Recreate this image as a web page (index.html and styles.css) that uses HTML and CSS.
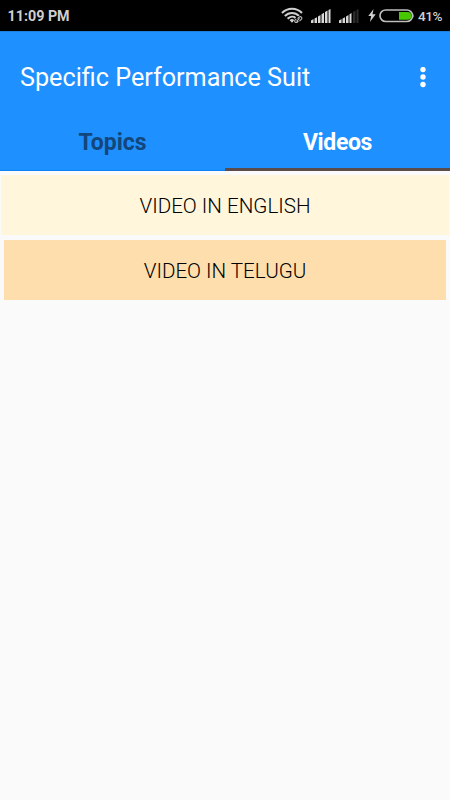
FILE: index.html
```html
<!DOCTYPE html>
<html lang="en">
<head>
<meta charset="utf-8">
<title>Specific Performance Suit</title>
<link rel="stylesheet" href="styles.css">
</head>
<body>
<div class="status">
  <span class="clock">11:09 PM</span>
  <div class="indicators">
    <svg class="wifi" width="22" height="16" viewBox="0 0 22 16" fill="none" stroke="#cfcfcf" stroke-width="2.100">
      <path d="M1 6C6.500.4 15.500.4 21 6M3.800 9C8 4.900 14 4.900 18.200 9M6.600 11.800C9.300 9.200 12.700 9.200 14.500 10.900"/>
      <path d="M8.600 13.300Q11 10.900 13.400 13.300L11 15.800Z" fill="#cfcfcf" stroke="none"/>
      <path d="M15 14.500l4.200-3.900" stroke="#000" stroke-width="4.500" stroke-linecap="round"/>
      <path d="M16.500 11.700l1.800-1.700q1.200-.8 2.100.1t.1 2.100l-2 1.900M18.600 11.400l-3.200 3M17.400 14l-1.300 1.200q-1.200.8-2-.1t-.1-2l1.300-1.300" stroke="#bbb" stroke-width="1.100"/>
    </svg>
    <svg class="signal" width="20" height="14" viewBox="0 0 20 14" fill="#d8d8d8">
      <path d="M0 14v-2.600l2.500-1.300V14zM3.500 14V9.600L6 8.200V14zM7 14V7.400l2.500-1.500V14zM10.500 14V5.200L13 3.700V14zM14 14V3.100l2.500-1.500V14zM17.500 14V1L19.500 0v14z"/>
    </svg>
    <svg class="signal2" width="20" height="14" viewBox="0 0 20 14" fill="#d8d8d8">
      <path d="M0 14v-2.600l2.500-1.300V14zM3.500 14V9.600L6 8.200V14zM7 14V7.400l2.500-1.500V14zM10.500 14V5.200L12.500 4V14z"/>
      <path fill="#2c2c2c" d="M14 14V3.100l2.500-1.500V14zM17.500 14V1L19.500 0v14z"/>
    </svg>
    <svg class="bolt" width="8" height="13" viewBox="0 0 8 13" fill="#d0d0d0"><path d="M5.600 0L.3 7h2.900L1.900 13 7.700 5.300H4.500z"/></svg>
    <svg class="battery" width="36" height="14" viewBox="0 0 36 14">
      <rect x="1" y="1" width="32.500" height="11.500" rx="5.700" fill="#000" stroke="#bdbdbd" stroke-width="1.700"/>
      <path d="M20 2.900h8.500a3.900 3.900 0 0 1 0 7.800H20z" fill="#48c800"/>
      <path d="M34.500 4.200q1.200 2.500 0 5z" fill="#bdbdbd"/>
    </svg>
    <span class="percent">41%</span>
  </div>
</div>
<header>
  <div class="toolbar">
    <h1>Specific Performance Suit</h1>
    <svg width="6" height="22" viewBox="0 0 6 22" fill="#fff"><circle cx="3" cy="2.500" r="2.700"/><circle cx="3" cy="10" r="2.700"/><circle cx="3" cy="17.500" r="2.700"/></svg>
  </div>
  <nav>
    <div class="tab">Topics</div>
    <div class="tab active">Videos</div>
  </nav>
</header>
<main>
  <div class="row english">VIDEO IN ENGLISH</div>
  <div class="row telugu">VIDEO IN TELUGU</div>
</main>
</body>
</html>
```

FILE: styles.css
```css
* { box-sizing: border-box; }
body { margin: 0; height: 800px; overflow: hidden; background: #fafafa; font-family: Roboto, sans-serif; }
.status { height: 31px; background: #000; color: #cfcfcf; display: flex; justify-content: space-between; padding: 0 7.5px; font-weight: 700; }
.clock { font-size: 14.3px; line-height: 33px; }
.indicators { display: flex; align-items: flex-start; }
.wifi { margin: 7px 8px 0 0; }
.signal { margin: 9px 8px 0 0; }
.signal2 { margin: 9px 9px 0 0; }
.bolt { margin: 9px 3px 0 0; }
.battery { margin: 9px 3px 0 0; }
.percent { width: 24.5px; font-size: 13.5px; font-weight: 500; letter-spacing: -.4px; line-height: 32px; white-space: nowrap; }
header { height: 140px; background: #1e90ff; border-top: 1px solid #1c7fe0; }
.toolbar { height: 91px; display: flex; align-items: center; justify-content: space-between; padding: 0 24.5px 0 20px; }
h1 { margin: 0; font-size: 25.2px; font-weight: 400; color: #fff; white-space: nowrap; }
.toolbar svg { flex: none; }
nav { height: 48px; display: flex; }
.tab { flex: 1; text-align: center; font-size: 23px; line-height: 40px; font-weight: 700; color: #13467a; border-bottom: 1px solid #0c82f7; }
.tab.active { color: #fff; letter-spacing: -.35px; border-bottom: 3px solid #5b4b4b; }
main { padding-top: 4px; }
.row { height: 60px; line-height: 62px; text-align: center; font-size: 20.6px; font-weight: 300; color: #000; }
.english { margin: 0 1px 5px; background: #fff6dc; }
.telugu { margin: 0 4px; background: #ffdead; }
```
